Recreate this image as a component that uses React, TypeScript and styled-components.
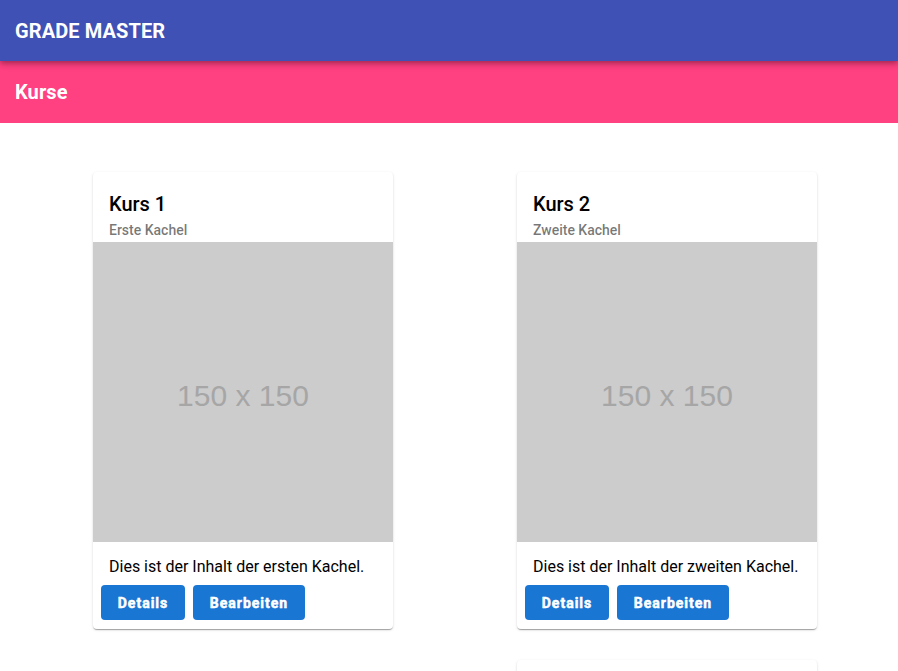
import styled, { createGlobalStyle } from "styled-components";

const GlobalStyle = createGlobalStyle`
  html, body {
    margin: 0;
    padding: 0;
    background: #ffffff;
    font-family: Roboto, "Liberation Sans", Arial, sans-serif;
    overflow: hidden;
  }
`;

const AppBar = styled.header`
  position: relative;
  z-index: 2;
  height: 61px;
  display: flex;
  align-items: center;
  padding: 0 15px;
  background: #3f51b5;
  color: #fff;
  box-shadow: 0 2px 4px -1px rgba(0, 0, 0, 0.2), 0 4px 5px 0 rgba(0, 0, 0, 0.14),
    0 1px 10px 0 rgba(0, 0, 0, 0.12);
`;

const SubBar = styled.div`
  height: 62px;
  display: flex;
  align-items: center;
  padding: 0 15px;
  background: #ff4081;
  color: #fff;
`;

const BarTitle = styled.h1`
  margin: 0;
  font-size: 20px;
  font-weight: 700;
  letter-spacing: 0.1px;
`;

const Grid = styled.main`
  display: flex;
  align-items: flex-start;
  gap: 124px;
  padding: 49px 0 0 93px;
`;

const Column = styled.div`
  display: flex;
  flex-direction: column;
  gap: 31px;
  width: 300px;
`;

const Card = styled.div`
  background: #fff;
  border-radius: 4px;
  overflow: hidden;
  box-shadow: 0 2px 1px -1px rgba(0, 0, 0, 0.2), 0 1px 1px 0 rgba(0, 0, 0, 0.14),
    0 1px 3px 0 rgba(0, 0, 0, 0.12);
`;

const CardHeader = styled.div`
  padding: 16px 16px 2px;
`;

const CardTitle = styled.div`
  font-size: 20px;
  font-weight: 500;
  line-height: 32px;
  color: #000;
`;

const CardSub = styled.div`
  font-size: 14px;
  font-weight: 500;
  line-height: 20px;
  color: rgba(0, 0, 0, 0.54);
`;

const Placeholder = styled.div`
  height: 300px;
  box-sizing: border-box;
  padding-top: 8px;
  display: flex;
  align-items: center;
  justify-content: center;
  background: #cccccc;
  color: #a6a6a6;
  font-family: "Liberation Sans", Arial, sans-serif;
  font-size: 30px;
`;

const CardText = styled.p`
  margin: 0;
  padding: 13px 16px 6px;
  font-size: 16px;
  line-height: 24px;
  color: #000;
`;

const Actions = styled.div`
  display: flex;
  gap: 8px;
  padding: 0 8px 9px;
`;

const Button = styled.button`
  height: 35px;
  padding: 0 12px;
  border: none;
  border-radius: 4px;
  background: #1976d2;
  color: #fff;
  font-family: Roboto, "Liberation Sans", Arial, sans-serif;
  font-size: 14px;
  font-weight: 700;
  letter-spacing: 1px;
  -webkit-text-stroke: 0.5px #fff;
  cursor: pointer;
`;

type Kurs = { title: string; sub: string; text: string };

const kurse: Kurs[][] = [
  [{ title: "Kurs 1", sub: "Erste Kachel", text: "Dies ist der Inhalt der ersten Kachel." }],
  [
    { title: "Kurs 2", sub: "Zweite Kachel", text: "Dies ist der Inhalt der zweiten Kachel." },
    { title: "Kurs 3", sub: "Dritte Kachel", text: "Dies ist der Inhalt der dritten Kachel." },
  ],
];

function KursCard({ kurs }: { kurs: Kurs }) {
  return (
    <Card>
      <CardHeader>
        <CardTitle>{kurs.title}</CardTitle>
        <CardSub>{kurs.sub}</CardSub>
      </CardHeader>
      <Placeholder>150 x 150</Placeholder>
      <CardText>{kurs.text}</CardText>
      <Actions>
        <Button style={{ width: 84 }}>Details</Button>
        <Button style={{ width: 112 }}>Bearbeiten</Button>
      </Actions>
    </Card>
  );
}

export default function App() {
  return (
    <>
      <GlobalStyle />
      <AppBar>
        <BarTitle>GRADE MASTER</BarTitle>
      </AppBar>
      <SubBar>
        <BarTitle>Kurse</BarTitle>
      </SubBar>
      <Grid>
        {kurse.map((col, i) => (
          <Column key={i}>
            {col.map((k) => (
              <KursCard key={k.title} kurs={k} />
            ))}
          </Column>
        ))}
      </Grid>
    </>
  );
}
